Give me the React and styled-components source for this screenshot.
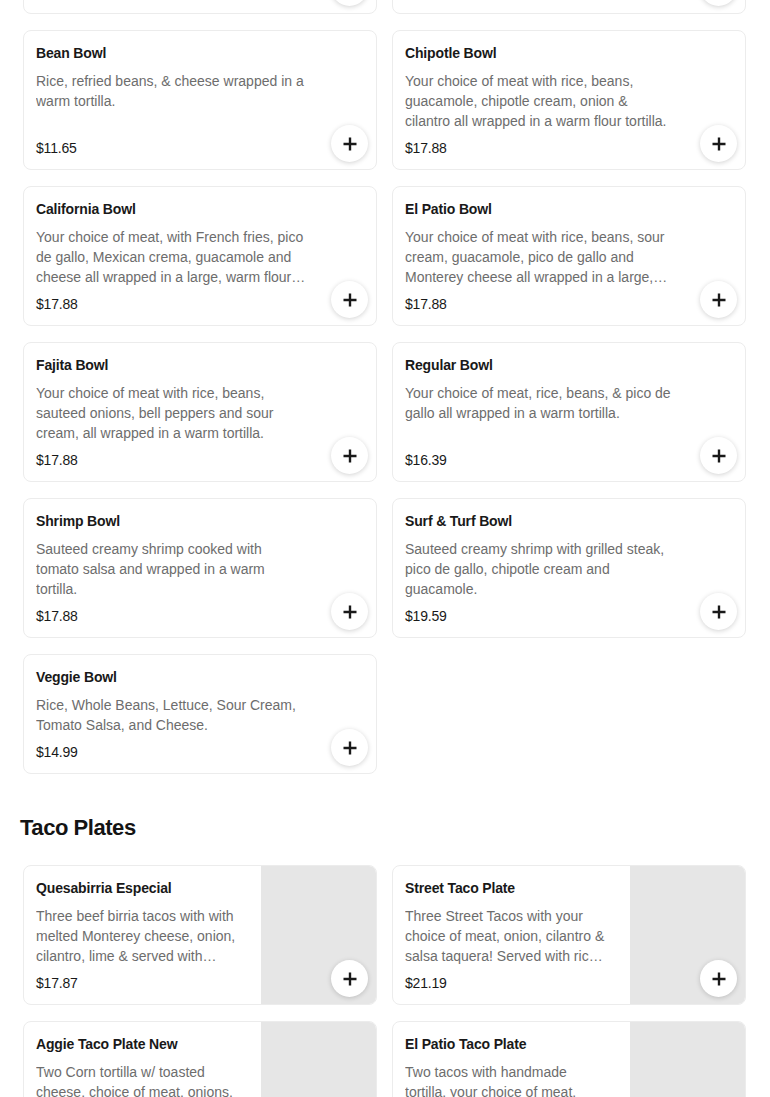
import React from "react";
import styled, { createGlobalStyle } from "styled-components";

const Global = createGlobalStyle`
  html, body { margin: 0; padding: 0; background: #ffffff; }
  body { font-family: "Liberation Sans", Arial, sans-serif; color: #191919; overflow: hidden; }
`;

const Page = styled.main`
  margin-top: -126px;
  padding-bottom: 40px;
`;

const Section = styled.section`
  & + & { margin-top: 42px; }
`;

const Heading = styled.h2`
  margin: 0 0 25px 20px;
  font-size: 22px;
  line-height: 24px;
  font-weight: 700;
  letter-spacing: -0.45px;
  color: #141414;
`;

const Grid = styled.div`
  display: grid;
  grid-template-columns: 1fr 1fr;
  column-gap: 15px;
  row-gap: 16px;
  padding: 0 24px 0 23px;
`;

const Card = styled.article`
  position: relative;
  display: flex;
  border: 1px solid #ececec;
  border-radius: 8px;
  background: #fff;
  overflow: hidden;
  min-height: ${(p) => (p.$image ? "138px" : "auto")};
`;

const Body = styled.div`
  flex: 1;
  min-width: 0;
  display: flex;
  flex-direction: column;
  padding: 12px 12px 11px 12px;
`;

const Title = styled.h3`
  margin: 0;
  font-size: 14px;
  line-height: 20px;
  font-weight: 700;
  letter-spacing: -0.15px;
  color: #191919;
`;

const Desc = styled.p`
  margin: 8px 0 0 0;
  width: ${(p) => (p.$narrow ? "202px" : "271px")};
  font-size: 14px;
  line-height: 20px;
  letter-spacing: 0;
  color: #6d6d6d;
  display: -webkit-box;
  -webkit-line-clamp: 3;
  -webkit-box-orient: vertical;
  overflow: hidden;
`;

const Price = styled.div`
  margin-top: auto;
  padding-top: 7px;
  font-size: 14px;
  line-height: 20px;
  letter-spacing: -0.2px;
  color: #191919;
`;

const Thumb = styled.div`
  width: 115px;
  flex-shrink: 0;
  background: #e6e6e6;
`;

const AddButton = styled.button`
  position: absolute;
  right: 8px;
  bottom: 7px;
  width: 37px;
  height: 37px;
  border-radius: 50%;
  border: none;
  background: #fff;
  box-shadow: 0 1px 5px rgba(0, 0, 0, 0.18);
  display: flex;
  align-items: center;
  justify-content: center;
  padding: 0;
  cursor: pointer;
`;

const PlusIcon = () => (
  <svg width="16" height="16" viewBox="0 0 16 16" aria-hidden="true">
    <path d="M8 1.5v13M1.5 8h13" stroke="#191919" strokeWidth="2.4" strokeLinecap="butt" fill="none" />
  </svg>
);

const bowls = [
  { name: "Chicken Bowl", desc: "Grilled chicken with rice, beans, lettuce, sour cream, pico de gallo and cheese all wrapped in a warm flour tortilla.", price: "$17.88" },
  { name: "Steak Bowl", desc: "Grilled steak with rice, beans, lettuce, sour cream, pico de gallo and cheese all wrapped in a warm flour tortilla.", price: "$17.88" },
  { name: "Bean Bowl", desc: "Rice, refried beans, & cheese wrapped in a warm tortilla.", price: "$11.65" },
  { name: "Chipotle Bowl", desc: "Your choice of meat with rice, beans, guacamole, chipotle cream, onion & cilantro all wrapped in a warm flour tortilla.", price: "$17.88" },
  { name: "California Bowl", desc: "Your choice of meat, with French fries, pico de gallo, Mexican crema, guacamole and cheese all wrapped in a large, warm flour tortilla.", price: "$17.88" },
  { name: "El Patio Bowl", desc: "Your choice of meat with rice, beans, sour cream, guacamole, pico de gallo and Monterey cheese all wrapped in a large, warm flour tortilla.", price: "$17.88" },
  { name: "Fajita Bowl", desc: "Your choice of meat with rice, beans, sauteed onions, bell peppers and sour cream, all wrapped in a warm tortilla.", price: "$17.88" },
  { name: "Regular Bowl", desc: "Your choice of meat, rice, beans, & pico de gallo all wrapped in a warm tortilla.", price: "$16.39" },
  { name: "Shrimp Bowl", desc: "Sauteed creamy shrimp cooked with tomato salsa and wrapped in a warm tortilla.", price: "$17.88" },
  { name: "Surf & Turf Bowl", desc: "Sauteed creamy shrimp with grilled steak, pico de gallo, chipotle cream and guacamole.", price: "$19.59" },
  { name: "Veggie Bowl", desc: "Rice, Whole Beans, Lettuce, Sour Cream, Tomato Salsa, and Cheese.", price: "$14.99" },
];

const plates = [
  { name: "Quesabirria Especial", desc: "Three beef birria tacos with with melted Monterey cheese, onion, cilantro, lime & served with consommé.", price: "$17.87" },
  { name: "Street Taco Plate", desc: "Three Street Tacos with your choice of meat, onion, cilantro & salsa taquera! Served with rice and beans.", price: "$21.19" },
  { name: "Aggie Taco Plate New", desc: "Two Corn tortilla w/ toasted cheese, choice of meat, onions, cilantro, served with rice and beans.", price: "$16.99" },
  { name: "El Patio Taco Plate", desc: "Two tacos with handmade tortilla, your choice of meat, onion and cilantro, served with rice and beans.", price: "$18.49" },
];

const MenuCard = ({ item, image }) => (
  <Card $image={image}>
    <Body>
      <Title>{item.name}</Title>
      <Desc $narrow={image}>{item.desc}</Desc>
      <Price>{item.price}</Price>
    </Body>
    {image && <Thumb />}
    <AddButton aria-label={`Add ${item.name}`}>
      <PlusIcon />
    </AddButton>
  </Card>
);

export default function App() {
  return (
    <>
      <Global />
      <Page>
        <Section>
          <Grid>
            {bowls.map((b) => (
              <MenuCard key={b.name} item={b} />
            ))}
          </Grid>
        </Section>
        <Section>
          <Heading>Taco Plates</Heading>
          <Grid>
            {plates.map((p) => (
              <MenuCard key={p.name} item={p} image />
            ))}
          </Grid>
        </Section>
      </Page>
    </>
  );
}
